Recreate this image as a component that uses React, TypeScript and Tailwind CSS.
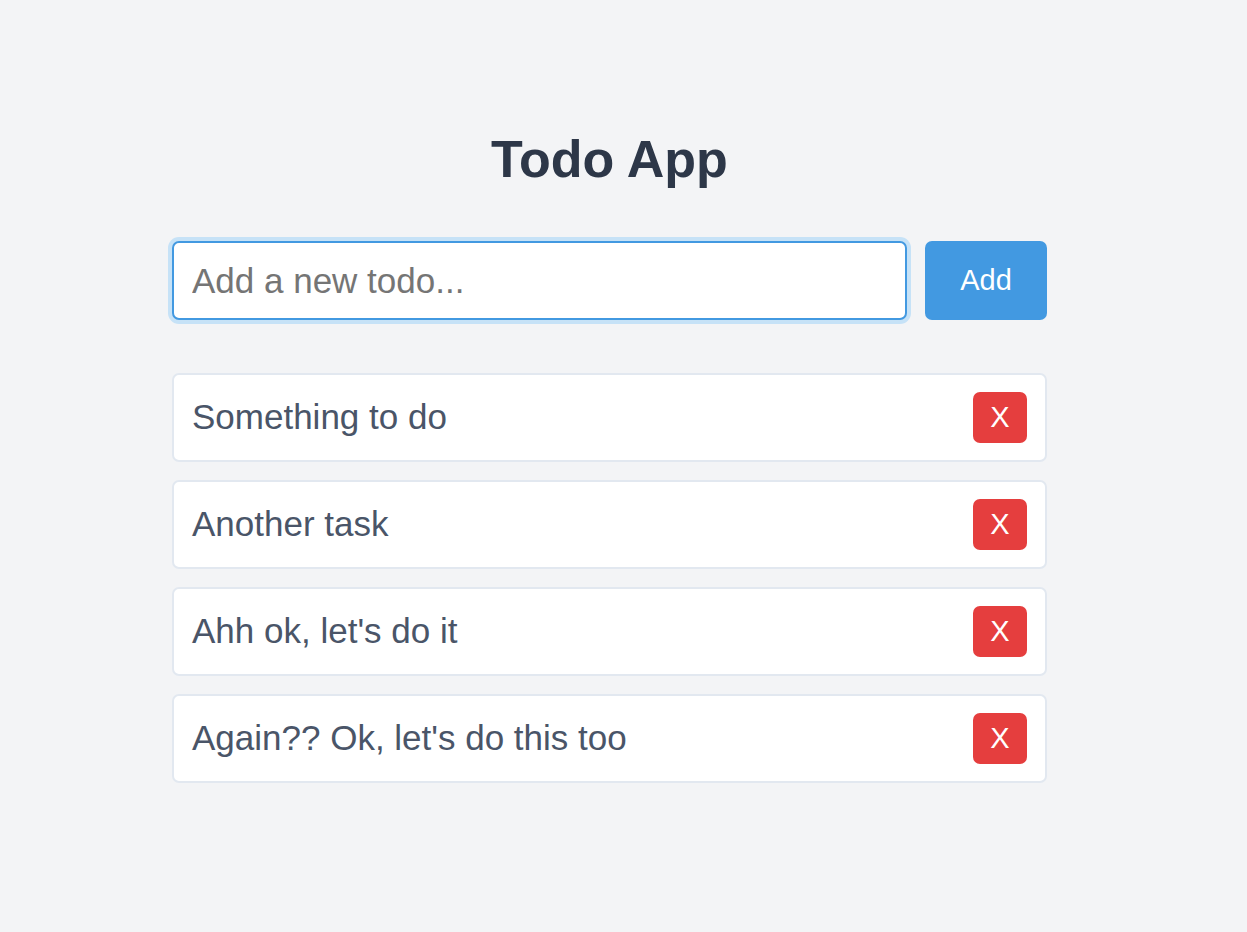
import React from "react";

const todos = [
  "Something to do",
  "Another task",
  "Ahh ok, let's do it",
  "Again?? Ok, let's do this too",
];

export default function App() {
  return (
    <div
      className="min-h-screen bg-[#f3f4f6] pr-[28px]"
      style={{ fontFamily: '"Liberation Sans", Arial, sans-serif' }}
    >
      <div className="w-[875px] mx-auto pt-[133px]">
        <h1 className="text-[52px] leading-none font-bold text-center text-[#2d3748] mb-[56px]">
          Todo App
        </h1>
        <div className="flex gap-[18px] h-[79px]">
          <input
            className="flex-1 min-w-0 bg-white border-2 border-[#4299e1] rounded-[7px] px-[18px] pt-[2px] text-[35px] text-[#4a5568] placeholder:text-[#757575] outline-none shadow-[0_0_0_4px_#c6e2f7]"
            placeholder="Add a new todo..."
          />
          <button className="w-[122px] bg-[#4299e1] text-white text-[29px] rounded-[7px]">
            Add
          </button>
        </div>
        <ul className="mt-[53px] flex flex-col gap-[18px]">
          {todos.map((t) => (
            <li
              key={t}
              className="h-[89px] bg-white border-2 border-[#e2e8f0] rounded-[7px] flex items-center justify-between pl-[18px] pr-[18px]"
            >
              <span className="text-[35px] text-[#4a5568]">{t}</span>
              <button className="w-[54px] h-[51px] bg-[#e53e3e] rounded-[7px] text-white text-[29px] leading-none">
                X
              </button>
            </li>
          ))}
        </ul>
      </div>
    </div>
  );
}
